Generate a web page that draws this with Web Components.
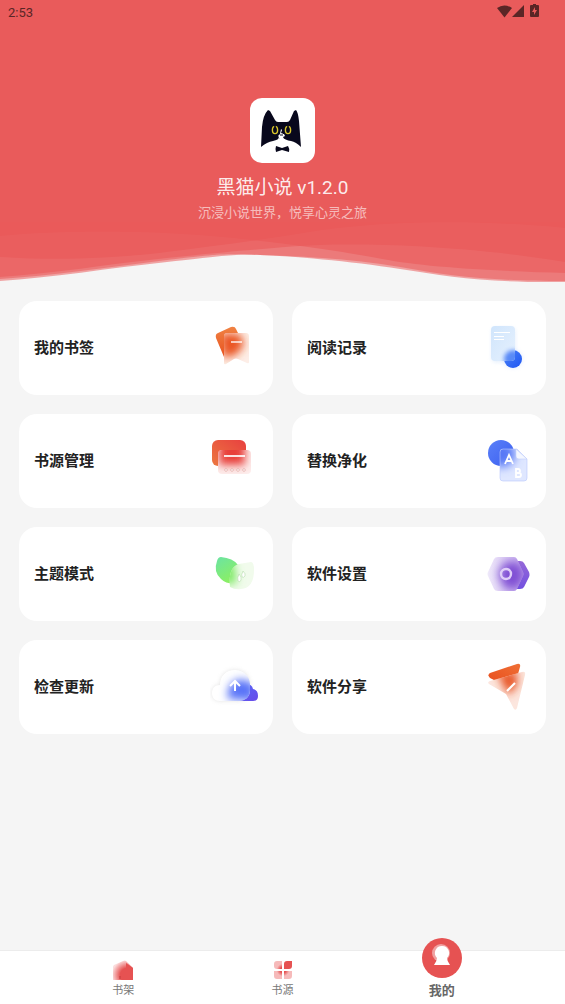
<!DOCTYPE html>
<html lang="zh-CN">
<head>
<meta charset="UTF-8">
<meta name="viewport" content="width=device-width, initial-scale=1">
<title>黑猫小说</title>
<style>
  html, body { margin: 0; }
  body {
    --accent: #e95b5b;
    --page: #f5f5f5;
    background: var(--page);
    color: #222;
    font-family: Roboto, "Noto Sans CJK SC", sans-serif;
  }
</style>
</head>
<body>
<novel-app></novel-app>

<script>
// Inner markup of every 48x48 card illustration
const ART = {
  bookmark: `
    <defs>
      <linearGradient id="a" x1="0" y1="0" x2="0" y2="1"><stop stop-color="#f08243"/><stop offset="1" stop-color="#e8521f"/></linearGradient>
      <clipPath id="c"><path d="M17 9h19q3 0 3 3v26q0 2-2 1l-9-4q-2-1-4 0l-8 5q-2 1-2-1V12q0-3 3-3z"/></clipPath>
      <filter id="f" x="-50%" y="-50%" width="200%" height="200%"><feGaussianBlur stdDeviation="4"/></filter>
    </defs>
    <path d="M8 9l13-6q4-1 5 2l3 6-12 22h-3L6 14q-1-4 2-5z" fill="url(#a)"/>
    <g clip-path="url(#c)">
      <path d="M12 8h30v34H12z" fill="#fdeee7"/>
      <path d="M10 9l20 1 4 11-8 10-13 3z" fill="#ea5522" filter="url(#f)"/>
    </g>
    <path d="M21 18h11" stroke="#fff" stroke-width="1.6" opacity=".85"/>`,
  record: `
    <defs>
      <linearGradient id="a" x1="0" y1="0" x2="1" y2="1"><stop stop-color="#d0e5fc"/><stop offset="1" stop-color="#e6f1fe"/></linearGradient>
      <linearGradient id="b" x1="0" y1="0" x2="1" y2="1"><stop stop-color="#4b83f8"/><stop offset="1" stop-color="#1f56f2"/></linearGradient>
      <clipPath id="c"><rect x="8" y="2" width="24" height="35" rx="4"/></clipPath>
      <filter id="f" x="-50%" y="-50%" width="200%" height="200%"><feGaussianBlur stdDeviation="2"/></filter>
    </defs>
    <rect x="9" y="4" width="23" height="34" rx="4" fill="#cfe2fb" opacity=".6" filter="url(#f)"/>
    <circle cx="30" cy="35" r="9" fill="#b9d0ff" opacity=".5" filter="url(#f)"/>
    <circle cx="30" cy="35" r="9" fill="url(#b)"/>
    <g clip-path="url(#c)">
      <rect x="8" y="2" width="24" height="35" fill="url(#a)"/>
      <circle cx="30" cy="35" r="9" fill="#3f78f6" opacity=".85" filter="url(#f)"/>
    </g>
    <path d="M11 8.500h16M11 12.500h10M11 15.500h10" stroke="#fff" stroke-width="1.200"/>`,
  source: `
    <defs>
      <linearGradient id="a" x1="1" y1="0" x2="0" y2="1"><stop stop-color="#e84040"/><stop offset="1" stop-color="#ec7840"/></linearGradient>
      <clipPath id="c"><rect x="8" y="13" width="33" height="24" rx="4"/></clipPath>
      <filter id="f" x="-50%" y="-50%" width="200%" height="200%"><feGaussianBlur stdDeviation="4"/></filter>
    </defs>
    <rect x="2" y="3" width="34" height="26" rx="6" fill="url(#a)"/>
    <g clip-path="url(#c)">
      <rect x="8" y="13" width="33" height="24" fill="#fdeeed"/>
      <rect x="9" y="3" width="26" height="25" fill="#e8403a" filter="url(#f)"/>
    </g>
    <path d="M14 19h21" stroke="#fff" stroke-width="2" opacity=".85"/>
    <g fill="#fff" stroke="#dc9a96" stroke-width=".6"><circle cx="16" cy="33" r="1.300"/><circle cx="22" cy="33" r="1.300"/><circle cx="28" cy="33" r="1.300"/><circle cx="34" cy="33" r="1.300"/></g>`,
  replace: `
    <defs>
      <linearGradient id="a" x1="0" y1="0" x2="1" y2="1"><stop stop-color="#5a80f8"/><stop offset="1" stop-color="#3c5ff0"/></linearGradient>
      <clipPath id="c"><path d="M20 12h14l10 10v19q0 3-3 3H20q-3 0-3-3V15q0-3 3-3z"/></clipPath>
      <filter id="f" x="-50%" y="-50%" width="200%" height="200%"><feGaussianBlur stdDeviation="5"/></filter>
    </defs>
    <circle cx="18" cy="16" r="13" fill="url(#a)"/>
    <g clip-path="url(#c)">
      <path d="M17 12h27v32H17z" fill="#dfe7ff"/>
      <circle cx="19" cy="17" r="13" fill="#5678f6" filter="url(#f)"/>
    </g>
    <path d="M20 12h14l10 10v19q0 3-3 3H20q-3 0-3-3V15q0-3 3-3z" fill="none" stroke="#b9c8fb" stroke-width=".6"/>
    <path d="M33 12v7q0 3 3 3h8z" fill="#f4f7ff" stroke="#c3d0fb" stroke-width=".6"/>
    <g fill="none" stroke="#fff" stroke-width="1.800">
      <path d="M22 27l4-9 4 9M23 24h6"/>
      <path d="M33 32v8h3q2 0 2-2t-2-2h-3 2q2 0 2-2t-2-2z"/>
    </g>`,
  theme: `
    <defs>
      <linearGradient id="a" x1="0" y1="0" x2=".6" y2="1"><stop stop-color="#6be3a4"/><stop offset="1" stop-color="#8df05e"/></linearGradient>
      <clipPath id="c"><path d="M20 37Q18 17 29 14l12-2q3 0 3 8 0 18-13 19-6 1-11-2z"/></clipPath>
      <filter id="f" x="-50%" y="-50%" width="200%" height="200%"><feGaussianBlur stdDeviation="4"/></filter>
    </defs>
    <path d="M11 7q12 1 17 8 5 8 1 18-12 2-18-4Q3 22 7 11q1-4 4-4z" fill="url(#a)"/>
    <g clip-path="url(#c)">
      <path d="M16 10h32v32H16z" fill="#f1fbec"/>
      <path d="M4 9l20 4 3 20-12 2z" fill="#80ea68" filter="url(#f)"/>
    </g>
    <path d="M33 21q3 3 2 5t-3 1q-1-2 1-6zM29 24q3 3 2 6t-3 1q-1-3 1-7z" fill="#fff" stroke="#b5dcab" stroke-width=".6"/>`,
  settings: `
    <defs>
      <linearGradient id="a" x1="0" y1="0" x2="0" y2="1"><stop stop-color="#9568d8"/><stop offset="1" stop-color="#7350e0"/></linearGradient>
      <linearGradient id="b"><stop stop-color="#f3effb"/><stop offset="1" stop-color="#c3a8ed"/></linearGradient>
      <clipPath id="c"><path d="M15 7h16q2 0 3 2l6 13q1 2 0 4l-6 13q-1 2-3 2H15q-3 0-4-2L5 26q-1-2 0-4l6-13q1-2 4-2z"/></clipPath>
      <filter id="f" x="-50%" y="-50%" width="200%" height="200%"><feGaussianBlur stdDeviation="5"/></filter>
    </defs>
    <path d="M24 11h13q3 0 4 2l5 9q1 3 0 5l-5 10q-1 2-4 2H24l-8-15z" fill="url(#a)"/>
    <g clip-path="url(#c)">
      <path d="M2 5h42v38H2z" fill="url(#b)"/>
      <path d="M22 12h14l6 12-6 15H22l-7-15z" fill="#8050d4" filter="url(#f)"/>
    </g>
    <circle cx="23" cy="24" r="5" fill="none" stroke="#dfcef8" stroke-width="2.400"/>`,
  update: `
    <defs>
      <linearGradient id="a" x1="0" y1="0" x2="1" y2="1"><stop stop-color="#536bfa"/><stop offset="1" stop-color="#6a4be8"/></linearGradient>
      <clipPath id="c"><path d="M10 38C5 38 2 35 2 30c0-5 3-8 8-8C10 13 16 7 25 7c8 0 15 6 15 14v6c0 7-5 11-11 11z"/></clipPath>
      <filter id="f" x="-50%" y="-50%" width="200%" height="200%"><feGaussianBlur stdDeviation="4"/></filter>
      <filter id="s" x="-50%" y="-50%" width="200%" height="200%"><feGaussianBlur stdDeviation="2"/></filter>
    </defs>
    <path d="M10 38C5 38 2 35 2 30c0-5 3-8 8-8C10 13 16 7 25 7c8 0 15 6 15 14v6c0 7-5 11-11 11z" fill="#bbb" opacity=".4" filter="url(#s)"/>
    <path d="M26 38q2-12 10-17 6 0 7 5 5 1 5 7 0 5-5 5z" fill="url(#a)"/>
    <g clip-path="url(#c)">
      <path d="M0 5h42v35H0z" fill="#fff"/>
      <path d="M18 36q-2-16 12-20l14 4v18z" fill="#5a74f8" filter="url(#f)"/>
    </g>
    <path d="M25 28v-9M20 23l5-5 5 5" fill="none" stroke="#fff" stroke-width="2"/>`,
  share: `
    <defs>
      <linearGradient id="a" x1="0" y1="1" x2="1" y2="0"><stop stop-color="#e9501f"/><stop offset="1" stop-color="#ef7035"/></linearGradient>
      <clipPath id="c"><path d="M7 18l32-9q4-1 3 3l-8 33q-1 3-3 1l-8-15L6 21q-2-2 1-3z"/></clipPath>
      <filter id="f" x="-50%" y="-50%" width="200%" height="200%"><feGaussianBlur stdDeviation="4"/></filter>
    </defs>
    <path d="M7 10l27-9q4-1 3 3l-2 7-22 7-6-3q-3-3 0-5z" fill="url(#a)"/>
    <g clip-path="url(#c)">
      <path d="M2 6h42v42H2z" fill="#fce6de"/>
      <path d="M14 10l20-2v15l-9 9z" fill="#e85628" filter="url(#f)"/>
    </g>
    <path d="M24 28l8-8" stroke="#fff" stroke-width="2.200"/>`
};

const TAB_ART = {
  shelf: `
    <svg viewBox="0 0 20 20" width="20" height="20" aria-hidden="true">
      <defs><radialGradient id="g" gradientUnits="userSpaceOnUse" cx="14" cy="15" r="15"><stop offset=".45" stop-color="#e65252"/><stop offset="1" stop-color="#fbdcdc"/></radialGradient></defs>
      <path d="M0 7q0-1 1-2l9-4q2-1 3 0l7 7v12H0z" fill="url(#g)"/>
      <path d="M13 3l7 5v12h-7z" fill="#e65252"/>
      <path d="M7 16v3" stroke="#c33b3b" stroke-width="1"/>
    </svg>`,
  source: `
    <svg viewBox="0 0 20 20" width="20" height="20" aria-hidden="true">
      <defs><radialGradient id="g" gradientUnits="userSpaceOnUse" cx="10" cy="10" r="7"><stop offset=".4" stop-color="#e65252"/><stop offset=".9" stop-color="#f6baba"/></radialGradient></defs>
      <path d="M1 4q0-3 3-3h5v8H4Q1 9 1 6zM1 11h8v8H4q-3 0-3-3zM11 11h8v5q0 3-3 3h-5z" fill="url(#g)"/>
      <path d="M11 4q0-3 3-3h5v5q0 3-3 3h-5z" fill="#e65252"/>
    </svg>`,
  mine: `
    <svg viewBox="0 0 40 40" width="40" height="40" aria-hidden="true">
      <circle cx="20" cy="20" r="20" fill="#e65252"/>
      <circle cx="19" cy="15" r="9" fill="#f0a0a0"/>
      <path d="M20 8a7 7 0 0 1 5 12q0 3 3 7H12q3-4 3-7a7 7 0 0 1 5-12z" fill="#fff"/>
    </svg>`
};

class StatusBar extends HTMLElement {
  connectedCallback() {
    this.attachShadow({ mode: 'open' });
    this.shadowRoot.innerHTML = `
      <style>
        :host {
          display: flex;
          justify-content: space-between;
          align-items: center;
          height: 24px;
          padding: 0 24px 0 8px;
          color: #5a2626;
          font-size: 13px;
        }
        svg { display: block; }
      </style>
      <time>2:53</time>
      <svg width="44" height="16" viewBox="0 0 44 16" fill="#5a2626" aria-hidden="true">
        <path d="M0 4q7-5 15 0L7.500 13.500z"/>
        <path d="M27 1v12H15z"/>
        <path fill-rule="evenodd" d="M36 0h3v1h2q1 0 1 1v10q0 1-1 1h-7q-1 0-1-1V2q0-1 1-1h2zM38 3l-3 5h2v3l3-5h-2z"/>
      </svg>
    `;
  }
}

class CatLogo extends HTMLElement {
  connectedCallback() {
    this.attachShadow({ mode: 'open' });
    this.shadowRoot.innerHTML = `
      <style>
        :host {
          display: block;
          width: 65px;
          height: 65px;
          border-radius: 12px;
          background: #fff;
        }
        svg { display: block; }
      </style>
      <svg viewBox="0 0 65 65" width="65" height="65" aria-hidden="true">
        <path d="M18 12l2 1 5 9q1 2 3 2h9q2 0 3-2l4-9 2-1q2 2 3 11l2 26q-5-5-10-6-6-1-9-4-5 3-9 4-6 1-12 6l1-20q1-12 6-17z" fill="#08081c"/>
        <g fill="#08081c" stroke="#d9c52b" stroke-width="1.400"><ellipse cx="25" cy="32" rx="2.600" ry="3.600"/><ellipse cx="38" cy="32" rx="2.600" ry="3.600"/></g>
        <path d="M25 27v4M38 27v4" stroke="#08081c" stroke-width="1.600"/>
        <path d="M31 31l1 1-1 3 3 1 1 2-2 1 1 2-3-1-3 1 1-2-1-1 2-2z" fill="#fff"/>
        <path d="M30 37h3M33 35l1 1" stroke="#08081c" stroke-width="1"/>
        <path d="M26 48l6 2 6-2q2 3 1 6l-7-2-6 2q-1-3 0-6z" fill="#08081c"/>
      </svg>
    `;
  }
}

class AppHero extends HTMLElement {
  connectedCallback() {
    this.attachShadow({ mode: 'open' });
    this.shadowRoot.innerHTML = `
      <style>
        :host {
          display: block;
          background: var(--accent);
        }
        .brand {
          display: flex;
          flex-direction: column;
          align-items: center;
          padding-top: 74px;
          text-align: center;
        }
        h1 {
          margin: 13px 0 4px;
          color: rgba(255, 255, 255, .9);
          font-size: 19px;
          font-weight: 400;
          line-height: 24px;
        }
        p {
          margin: 0;
          color: rgba(255, 255, 255, .6);
          font-size: 13px;
          line-height: 18px;
        }
        .waves {
          display: block;
          width: 100%;
          height: 61px;
          background: var(--page);
        }
      </style>
      <status-bar></status-bar>
      <div class="brand">
        <cat-logo></cat-logo>
        <h1><slot name="title"></slot></h1>
        <p><slot name="slogan"></slot></p>
      </div>
      <svg class="waves" viewBox="0 222 565 61" preserveAspectRatio="none" aria-hidden="true">
        <g fill="#e95757" fill-opacity=".52">
          <path d="M0 221V236C65 230 150 231 210 236S340 251 382 259S490 271 565 273V221z"/>
          <path d="M0 221V257C60 261 120 258 167 252S260 240 310 232S450 217 565 228V221z"/>
          <path d="M0 221V277C50 274 110 264 167 258S260 249 300 246S450 243 565 262V221z"/>
          <path d="M0 221V279C50 276 110 267 167 260S230 254 260 255S350 258 400 267S490 281 565 281V221z"/>
          <path d="M0 221V281C50 278 110 268 167 262S230 254 260 255S350 261 400 269S490 283 565 282V221z"/>
        </g>
      </svg>
    `;
  }
}

class MenuCard extends HTMLElement {
  connectedCallback() {
    this.attachShadow({ mode: 'open' });
    this.shadowRoot.innerHTML = `
      <style>
        :host { display: block; }
        button {
          display: flex;
          justify-content: space-between;
          align-items: center;
          width: 100%;
          padding: 23px 15px;
          border: 0;
          border-radius: 18px;
          background: #fff;
          color: inherit;
          font: inherit;
          font-size: 15px;
          font-weight: 700;
          line-height: 20px;
          cursor: pointer;
        }
        svg { display: block; }
      </style>
      <button type="button">
        <slot></slot>
        <svg viewBox="0 0 48 48" width="48" height="48" aria-hidden="true">${ART[this.getAttribute('art')]}</svg>
      </button>
    `;
  }
}

class TabItem extends HTMLElement {
  connectedCallback() {
    this.attachShadow({ mode: 'open' });
    this.shadowRoot.innerHTML = `
      <style>
        :host {
          display: block;
          width: 72px;
        }
        a {
          display: flex;
          flex-direction: column;
          align-items: center;
          gap: 3px;
          color: #777;
          font-size: 11px;
          line-height: 16px;
          text-decoration: none;
        }
        svg { display: block; }
        :host([active]) a {
          gap: 5px;
          color: #666;
          font-size: 13px;
          font-weight: 700;
        }
      </style>
      <a href="#${this.getAttribute('art')}">${TAB_ART[this.getAttribute('art')]}<slot></slot></a>
    `;
  }
}

class TabBar extends HTMLElement {
  connectedCallback() {
    this.attachShadow({ mode: 'open' });
    this.shadowRoot.innerHTML = `
      <style>
        :host { display: block; }
        nav {
          display: flex;
          justify-content: space-evenly;
          align-items: flex-end;
          box-sizing: border-box;
          height: 54px;
          padding-bottom: 5px;
          border-top: 1px solid #ececec;
          background: #fff;
        }
      </style>
      <nav><slot></slot></nav>
    `;
  }
}

class NovelApp extends HTMLElement {
  connectedCallback() {
    this.attachShadow({ mode: 'open' });
    this.shadowRoot.innerHTML = `
      <style>
        :host {
          display: flex;
          flex-direction: column;
          min-height: 100vh;
        }
        main {
          flex: 1;
          display: grid;
          grid-template-columns: 1fr 1fr;
          align-content: start;
          gap: 19px;
          padding: 18px 19px;
        }
      </style>
      <app-hero>
        <span slot="title">黑猫小说 v1.2.0</span>
        <span slot="slogan">沉浸小说世界，悦享心灵之旅</span>
      </app-hero>
      <main>
        <menu-card art="bookmark">我的书签</menu-card>
        <menu-card art="record">阅读记录</menu-card>
        <menu-card art="source">书源管理</menu-card>
        <menu-card art="replace">替换净化</menu-card>
        <menu-card art="theme">主题模式</menu-card>
        <menu-card art="settings">软件设置</menu-card>
        <menu-card art="update">检查更新</menu-card>
        <menu-card art="share">软件分享</menu-card>
      </main>
      <tab-bar>
        <tab-item art="shelf">书架</tab-item>
        <tab-item art="source">书源</tab-item>
        <tab-item art="mine" active>我的</tab-item>
      </tab-bar>
    `;
  }
}

customElements.define('status-bar', StatusBar);
customElements.define('cat-logo', CatLogo);
customElements.define('app-hero', AppHero);
customElements.define('menu-card', MenuCard);
customElements.define('tab-item', TabItem);
customElements.define('tab-bar', TabBar);
customElements.define('novel-app', NovelApp);
</script>
</body>
</html>
